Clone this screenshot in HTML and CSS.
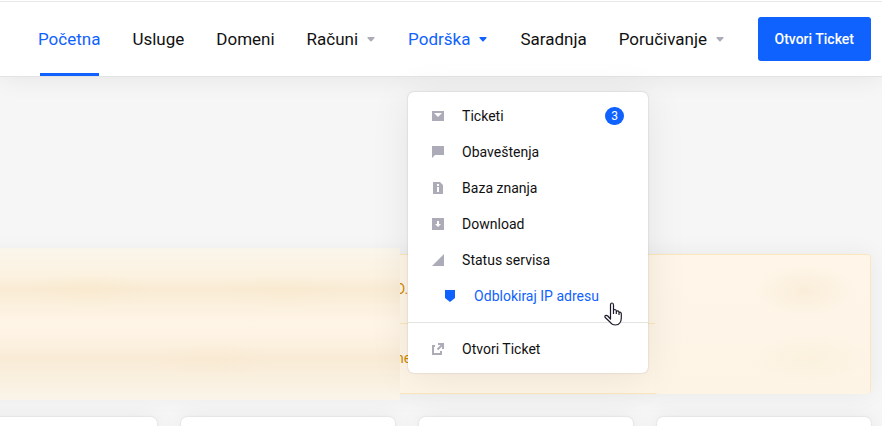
FILE: index.html
```html
<!DOCTYPE html>
<html lang="sr-Latn">
<head>
<meta charset="utf-8">
<title>Početna</title>
<link rel="stylesheet" href="styles.css">
</head>
<body>
<header class="header">
  <nav class="nav">
    <ul class="nav-list">
      <li class="nav-item"><a class="nav-link nav-link-current" href="#">Početna</a></li>
      <li class="nav-item"><a class="nav-link" href="#">Usluge</a></li>
      <li class="nav-item"><a class="nav-link" href="#">Domeni</a></li>
      <li class="nav-item"><a class="nav-link" href="#">Računi<svg class="caret" viewBox="0 0 8 5"><path d="M1 0h6q1 0 .5 1L4.600 4.200q-.6.600-1.200 0L.5 1Q0 0 1 0z"/></svg></a></li>
      <li class="nav-item">
        <a class="nav-link nav-link-open" href="#">Podrška<svg class="caret" viewBox="0 0 8 5"><path d="M1 0h6q1 0 .5 1L4.600 4.200q-.6.600-1.200 0L.5 1Q0 0 1 0z"/></svg></a>
        <div class="menu">
          <ul class="menu-list">
            <li><a class="menu-link" href="#"><svg class="icon" viewBox="0 0 12 12"><path fill-rule="evenodd" d="M0 1h12v10H0zM2 3l4 4 4-4z"/></svg>Ticketi<span class="badge">3</span></a></li>
            <li><a class="menu-link" href="#"><svg class="icon" viewBox="0 0 12 12"><path d="M0 0h12v9H3l-3 3z"/></svg>Obaveštenja</a></li>
            <li><a class="menu-link" href="#"><svg class="icon" viewBox="0 0 12 12"><path fill-rule="evenodd" d="M1 0h7l3 3v9H1zM5 2v2h2V2zM5 5v5h2V5z"/></svg>Baza znanja</a></li>
            <li><a class="menu-link" href="#"><svg class="icon" viewBox="0 0 12 12"><path fill-rule="evenodd" d="M0 0h12v12H0zM5 3v3H3l3 3 3-3H7V3z"/></svg>Download</a></li>
            <li><a class="menu-link" href="#"><svg class="icon" viewBox="0 0 12 12"><path d="M12 0v12H0z"/></svg>Status servisa</a></li>
            <li><a class="menu-link menu-link-active" href="#"><svg class="icon" viewBox="0 0 12 12"><path d="M1 0h10v8l-5 4-5-4z"/></svg>Odblokiraj IP adresu</a></li>
          </ul>
          <ul class="menu-list menu-footer">
            <li><a class="menu-link" href="#"><svg class="icon" viewBox="0 0 12 12"><path d="M0 2h3v2H2v6h6V8h2v4H0zM6 0h6v6h-2V3.400L6.200 7.200 4.800 5.800 8.600 2H6z"/></svg>Otvori Ticket</a></li>
          </ul>
          <svg class="pointer" viewBox="0 0 18 24"><path d="M6.500 15V3q0-2 1.500-2t1.500 2v6q0-1.500 1.300-1.500t1.500 1.500v1q0-1.200 1.300-1.200t1.400 1.400v1q0-1 1-1t1.300 1.500V16q0 3-1.500 5-1.300 2-4.300 2-3.500 0-5.500-3L1.200 15.500q-.7-1.500.3-2t2.300.5L6.500 17zM9.500 8.500V12M12.300 9v3M15 10.500V13"/></svg>
        </div>
      </li>
      <li class="nav-item"><a class="nav-link" href="#">Saradnja</a></li>
      <li class="nav-item"><a class="nav-link" href="#">Poručivanje<svg class="caret" viewBox="0 0 8 5"><path d="M1 0h6q1 0 .5 1L4.600 4.200q-.6.600-1.200 0L.5 1Q0 0 1 0z"/></svg></a></li>
    </ul>
  </nav>
  <button class="ticket-button" type="button">Otvori Ticket</button>
</header>
<main class="main">
  <section class="notices">
    <p class="notice">D.</p>
    <p class="notice">ne</p>
    <div class="haze haze-start"></div>
    <div class="haze haze-end"></div>
  </section>
  <section class="cards">
    <div class="card"></div>
    <div class="card"></div>
    <div class="card"></div>
    <div class="card"></div>
  </section>
</main>
</body>
</html>
```
FILE: styles.css
```css
* {
  box-sizing: border-box;
}

body {
  display: flex;
  flex-direction: column;
  margin: 0;
  height: 100vh;
  overflow: hidden;
  background: #f6f6f6;
  color: #111;
  font: 14px/20px Roboto, sans-serif;
}

a {
  color: inherit;
  text-decoration: none;
}

ul {
  margin: 0;
  padding: 0;
  list-style: none;
}

.header {
  position: relative;
  z-index: 2;
  display: flex;
  align-items: center;
  justify-content: space-between;
  margin-top: 1px;
  padding: 0 11px 0 38px;
  background: #fff;
  border-top: 1px solid #e8e8e8;
  border-bottom: 1px solid #e3e3e3;
  box-shadow: 0 0 24px rgba(0, 0, 0, 0.08);
}

.header::before {
  content: "";
  position: absolute;
  inset: -2px 0 auto;
  height: 1px;
  background: #fff;
}

.nav-list {
  display: flex;
  gap: 32px;
}

.nav-item {
  position: relative;
}

.nav-link {
  display: flex;
  align-items: center;
  gap: 8px;
  height: 74px;
  font-size: 17px;
}

.nav-link-current {
  color: #1062fe;
}

.nav-link-current::after {
  content: "";
  position: absolute;
  inset: auto 1px 0 2px;
  height: 3px;
  background: #1062fe;
}

.nav-link-open {
  color: #1062fe;
}

.caret {
  width: 8px;
  height: 5px;
  margin: 0 1px;
  fill: #abacb8;
}

.nav-link-open .caret {
  fill: currentColor;
}

.ticket-button {
  height: 44px;
  padding: 0 17px;
  border: 0;
  border-radius: 3px;
  background: #1062fe;
  color: #fff;
  font: 500 14px/20px Roboto, sans-serif;
}

.menu {
  position: absolute;
  top: 90px;
  left: 0;
  width: 240px;
  padding: 6px 0;
  border-radius: 6px;
  background: #fff;
  box-shadow: 0 0 2px rgba(0, 0, 0, 0.2), 0 4px 40px rgba(0, 0, 0, 0.08);
}

.menu-footer {
  margin-top: 8px;
  padding-top: 8px;
  border-top: 1px solid #e3e3e3;
}

.menu-link {
  display: flex;
  align-items: center;
  gap: 18px;
  height: 36px;
  padding: 0 24px;
}

.menu-link-active {
  padding-left: 36px;
  color: #1062fe;
}

.icon {
  width: 12px;
  height: 12px;
  fill: #abacb8;
}

.menu-link-active .icon {
  fill: currentColor;
}

.badge {
  margin-left: auto;
  width: 19px;
  border-radius: 9px;
  background: #1062fe;
  color: #fff;
  font-size: 12px;
  line-height: 18px;
  text-align: center;
}

.pointer {
  position: absolute;
  top: 210px;
  right: 26px;
  width: 18px;
  height: 24px;
  fill: #fff;
  stroke: #1b1b2b;
  stroke-width: 1.2;
  stroke-linejoin: round;
}

.main {
  flex: 1;
  min-height: 0;
  overflow: hidden;
  margin-left: -57px;
  padding: 177px 11px 0 0;
}

.notices {
  position: relative;
  padding-bottom: 1px;
  border: 1px solid #fce6bb;
  border-radius: 4px;
  background: #fff5e7;
  box-shadow: 0 0 24px rgba(0, 0, 0, 0.06);
}

.notice {
  margin: 0;
  padding: 24px 0 24px 452px;
  color: #d08a00;
}

.notice + .notice {
  border-top: 1px solid #fce6bb;
}

.haze {
  position: absolute;
}

.haze-start {
  top: -7px;
  bottom: -7px;
  left: 0;
  width: 456px;
  background:
    radial-gradient(ellipse 65px 18px at 145px 41px, rgba(246, 228, 190, 0.2), transparent),
    radial-gradient(ellipse 65px 18px at 340px 42px, rgba(246, 228, 190, 0.15), transparent),
    radial-gradient(ellipse 60px 18px at 270px 112px, rgba(246, 228, 190, 0.15), transparent),
    linear-gradient(#faf5eb, #fcf2e1 18%, #f9ebd4 27%, #fcf1df 39%, #fff5e7 50%, #fdf2e2 60%, #f9ebd6 73%, #faf0df 86%, #faf4ea);
}

.haze-end {
  top: 0;
  right: 0;
  bottom: -1px;
  width: 215px;
  border-radius: 3px;
  background:
    radial-gradient(ellipse 50px 26px at 150px 36px, #faeeda, transparent),
    radial-gradient(ellipse 60px 24px at 155px 104px, #fbf1de, transparent),
    linear-gradient(#fff6e9, #fdf4e6);
}

.cards {
  display: grid;
  grid-template-columns: repeat(4, 1fr);
  gap: 24px;
  margin-top: 23px;
}

.card {
  height: 120px;
  border-radius: 6px;
  background: #fff;
  box-shadow: 0 0 2px rgba(0, 0, 0, 0.15), 0 0 24px rgba(0, 0, 0, 0.06);
}
```
